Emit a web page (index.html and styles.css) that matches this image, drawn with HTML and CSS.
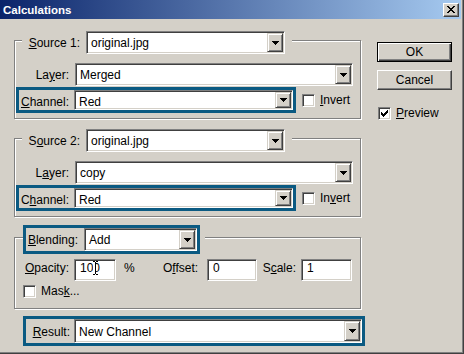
FILE: index.html
```html
<!DOCTYPE html>
<html lang="en">
<head>
<meta charset="UTF-8">
<title>Calculations</title>
<link rel="stylesheet" href="styles.css">
</head>
<body>
<div class="dialog">
<div class="titlebar">
<span class="title">Calculations</span>
<span class="close-btn"><svg width="8" height="7" viewBox="0 0 8 7"><path d="M0 0h2v1h-2z M6 0h2v1h-2z M1 1h2v1h-2z M5 1h2v1h-2z M2 2h4v1h-4z M3 3h2v1h-2z M2 4h4v1h-4z M1 5h2v1h-2z M5 5h2v1h-2z M0 6h2v1h-2z M6 6h2v1h-2z"/></svg></span>
</div>
<div class="content">
<div class="main">

<fieldset class="group">
<legend>
<span class="lbl src-lbl"><u>S</u>ource 1:</span>
<div class="combo src-combo"><span class="value">original.jpg</span><span class="drop"><svg width="7" height="4" viewBox="0 0 7 4"><path d="M0 0h7v1h-1v1h-1v1h-1v1h-1v-1h-1v-1h-1v-1h-1z"/></svg></span></div>
</legend>
<div class="row">
<span class="lbl">La<u>y</u>er:</span>
<div class="combo layer-combo"><span class="value">Merged</span><span class="drop"><svg width="7" height="4" viewBox="0 0 7 4"><path d="M0 0h7v1h-1v1h-1v1h-1v1h-1v-1h-1v-1h-1v-1h-1z"/></svg></span></div>
</div>
<div class="chan-row">
<div class="hl chan">
<span class="lbl"><u>C</u>hannel:</span>
<div class="combo chan-combo"><span class="value">Red</span><span class="drop"><svg width="7" height="4" viewBox="0 0 7 4"><path d="M0 0h7v1h-1v1h-1v1h-1v1h-1v-1h-1v-1h-1v-1h-1z"/></svg></span></div>
</div>
<div class="check"><span class="box"></span><span><u>I</u>nvert</span></div>
</div>
</fieldset>

<fieldset class="group">
<legend>
<span class="lbl src-lbl">S<u>o</u>urce 2:</span>
<div class="combo src-combo"><span class="value">original.jpg</span><span class="drop"><svg width="7" height="4" viewBox="0 0 7 4"><path d="M0 0h7v1h-1v1h-1v1h-1v1h-1v-1h-1v-1h-1v-1h-1z"/></svg></span></div>
</legend>
<div class="row">
<span class="lbl">L<u>a</u>yer:</span>
<div class="combo layer-combo"><span class="value">copy</span><span class="drop"><svg width="7" height="4" viewBox="0 0 7 4"><path d="M0 0h7v1h-1v1h-1v1h-1v1h-1v-1h-1v-1h-1v-1h-1z"/></svg></span></div>
</div>
<div class="chan-row">
<div class="hl chan">
<span class="lbl">C<u>h</u>annel:</span>
<div class="combo chan-combo"><span class="value">Red</span><span class="drop"><svg width="7" height="4" viewBox="0 0 7 4"><path d="M0 0h7v1h-1v1h-1v1h-1v1h-1v-1h-1v-1h-1v-1h-1z"/></svg></span></div>
</div>
<div class="check"><span class="box"></span><span>In<u>v</u>ert</span></div>
</div>
</fieldset>

<fieldset class="group blend">
<legend>
<div class="hl blend-hl">
<span class="lbl"><u>B</u>lending:</span>
<div class="combo blend-combo"><span class="value">Add</span><span class="drop"><svg width="7" height="4" viewBox="0 0 7 4"><path d="M0 0h7v1h-1v1h-1v1h-1v1h-1v-1h-1v-1h-1v-1h-1z"/></svg></span></div>
</div>
</legend>
<div class="opts">
<span class="txt op-lbl"><u>O</u>pacity:</span>
<div class="field op-field">10<span class="ibeam">0<svg width="5" height="14" viewBox="0 0 5 14"><path fill="#fff" d="M0 1h3v12h-3z"/><path d="M0 0h2v1h-2z M3 0h2v1h-2z M2 1h1v12h-1z M0 13h2v1h-2z M3 13h2v1h-2z"/></svg></span></div>
<span class="txt unit">%</span>
<span class="txt off-lbl">O<u>f</u>fset:</span>
<div class="field off-field">0</div>
<span class="txt scale-lbl">S<u>c</u>ale:</span>
<div class="field scale-field">1</div>
</div>
<div class="check mask"><span class="box"></span><span>Mas<u>k</u>...</span></div>
</fieldset>

<div class="hl result">
<span class="lbl"><u>R</u>esult:</span>
<div class="combo result-combo"><span class="value">New Channel</span><span class="drop"><svg width="7" height="4" viewBox="0 0 7 4"><path d="M0 0h7v1h-1v1h-1v1h-1v1h-1v-1h-1v-1h-1v-1h-1z"/></svg></span></div>
</div>

</div>
<div class="side">
<div class="btn default">OK</div>
<div class="btn">Cancel</div>
<div class="check"><span class="box"><svg width="7" height="7" viewBox="0 0 7 7"><path d="M6 0h1v3h-1z M5 1h1v3h-1z M4 2h1v3h-1z M3 3h1v3h-1z M2 4h1v3h-1z M1 3h1v3h-1z M0 2h1v3h-1z"/></svg></span><span><u>P</u>review</span></div>
</div>
</div>
</div>
</body>
</html>
```

FILE: styles.css
```css
body {
margin: 0;
font-family: "Liberation Sans", Arial, sans-serif;
font-size: 12px;
color: #000;
background-color: #d4d0c8;
}

.dialog {
width: 464px;
height: 354px;
box-sizing: border-box;
background-color: #d4d0c8;
border-right: 1px solid #404040;
border-bottom: 1px solid #404040;
box-shadow: inset -1px -1px 0 #808080;
}

.titlebar {
display: flex;
align-items: center;
width: 461px;
height: 19px;
background: linear-gradient(to right, #0a246a, #a6caf0);
}

.title {
padding: 2px 0 0 3px;
line-height: 17px;
font-size: 11.5px;
font-weight: bold;
color: #fff;
}

.close-btn {
display: flex;
align-items: center;
justify-content: center;
width: 16px;
height: 14px;
box-sizing: border-box;
margin-left: auto;
margin-right: 2px;
background-color: #d4d0c8;
border: 1px solid;
border-color: #fff #404040 #404040 #fff;
box-shadow: inset -1px -1px 0 #808080;
}

.content {
display: flex;
padding: 12px 0 0 14px;
}

.main {
width: 347px;
}

.side {
margin-left: 16px;
padding-top: 11px;
}

/* group boxes */
.group {
margin: 0;
padding: 13px 0 5px 1px;
min-width: 0;
border: 1px solid #808080;
box-shadow: 1px 1px 0 #fff, inset 1px 1px 0 #fff;
}

.group + .group {
margin-top: 10px;
}

.group.blend {
margin-top: 8px;
padding-top: 9px;
padding-bottom: 10px;
}

.group legend {
display: flex;
align-items: flex-start;
height: 19px;
margin-left: 6px;
padding: 0 7px 0 0;
background-color: #d4d0c8;
}

.group.blend legend {
height: 25px;
margin-left: 7px;
padding-right: 5px;
}

.lbl {
flex: none;
padding-top: 4px;
line-height: 17px;
text-align: right;
white-space: nowrap;
}

.src-lbl {
width: 58px;
margin-right: 6px;
}

.row {
display: flex;
align-items: flex-start;
}

.row .lbl {
width: 53px;
margin-right: 6px;
}

/* combo boxes */
.combo {
display: flex;
flex: none;
box-sizing: border-box;
height: 23px;
padding: 1px;
background-color: #fff;
border: 1px solid;
border-color: #808080 #fff #fff #808080;
box-shadow: inset 1px 1px 0 #404040, inset -1px -1px 0 #d4d0c8;
}

.combo .value {
flex: 1;
padding: 2px 0 0 3px;
line-height: 17px;
white-space: nowrap;
}

.drop {
display: flex;
align-items: center;
justify-content: center;
width: 16px;
box-sizing: border-box;
background-color: #d4d0c8;
border: 1px solid;
border-color: #d4d0c8 #404040 #404040 #d4d0c8;
box-shadow: inset 1px 1px 0 #fff, inset -1px -1px 0 #808080;
}

.src-combo {
width: 199px;
}

.layer-combo {
width: 278px;
}

.chan-combo {
width: 219px;
height: 20px;
}

.blend-combo {
width: 113px;
}

.result-combo {
width: 288px;
height: 24px;
}

.result-combo .value {
padding-top: 3px;
}

/* highlighted rows */
.hl {
display: flex;
align-items: flex-start;
box-sizing: border-box;
border: 3px solid #0b5a82;
background-color: #d4d0c8;
}

.chan-row {
display: flex;
align-items: center;
margin-top: 1px;
}

.chan {
width: 280px;
height: 26px;
}

.chan .lbl {
width: 50px;
margin-right: 5px;
}

.blend-hl {
width: 177px;
height: 29px;
}

.blend-hl .lbl {
width: 52px;
margin-right: 6px;
}

.result {
width: 342px;
height: 30px;
margin: 7px 0 0 9px;
}

.result .lbl {
width: 44px;
margin-right: 4px;
padding-top: 5px;
}

/* checkboxes */
.check {
display: flex;
align-items: center;
line-height: 14px;
white-space: nowrap;
}

.box {
display: flex;
align-items: center;
justify-content: center;
width: 13px;
height: 13px;
box-sizing: border-box;
margin-right: 5px;
background-color: #fff;
border: 1px solid;
border-color: #808080 #fff #fff #808080;
box-shadow: inset 1px 1px 0 #404040, inset -1px -1px 0 #d4d0c8;
}

.chan-row .check {
margin-left: 6px;
}

.check.mask {
margin: 3px 0 0 7px;
}

/* opacity / offset / scale */
.opts {
display: flex;
align-items: flex-start;
}

.txt {
flex: none;
box-sizing: border-box;
padding-top: 2px;
line-height: 15px;
white-space: nowrap;
}

.op-lbl {
width: 53px;
margin-right: 5px;
text-align: right;
}

.unit {
width: 47px;
padding-left: 8px;
}

.off-lbl {
width: 44px;
}

.scale-lbl {
width: 44px;
padding-right: 5px;
text-align: right;
}

.field {
flex: none;
box-sizing: border-box;
height: 22px;
padding: 1px 0 0 5px;
line-height: 15px;
background-color: #fff;
border: 1px solid;
border-color: #808080 #fff #fff #808080;
box-shadow: inset 1px 1px 0 #404040, inset -1px -1px 0 #d4d0c8;
}

.op-field {
width: 42px;
}

.off-field {
width: 50px;
}

.scale-field {
width: 51px;
}

.ibeam {
position: relative;
}

.ibeam svg {
position: absolute;
left: 0;
top: 0;
}

/* buttons */
.btn {
width: 75px;
height: 20px;
box-sizing: border-box;
line-height: 18px;
text-align: center;
border: 1px solid;
border-color: #fff #404040 #404040 #fff;
box-shadow: inset -1px -1px 0 #808080;
}

.btn.default {
border-color: #000;
box-shadow: inset 1px 1px 0 #fff, inset -1px -1px 0 #404040, inset -2px -2px 0 #808080;
}

.btn + .btn {
margin-top: 8px;
}

.side .check {
margin: 16px 0 0 1px;
}
```
